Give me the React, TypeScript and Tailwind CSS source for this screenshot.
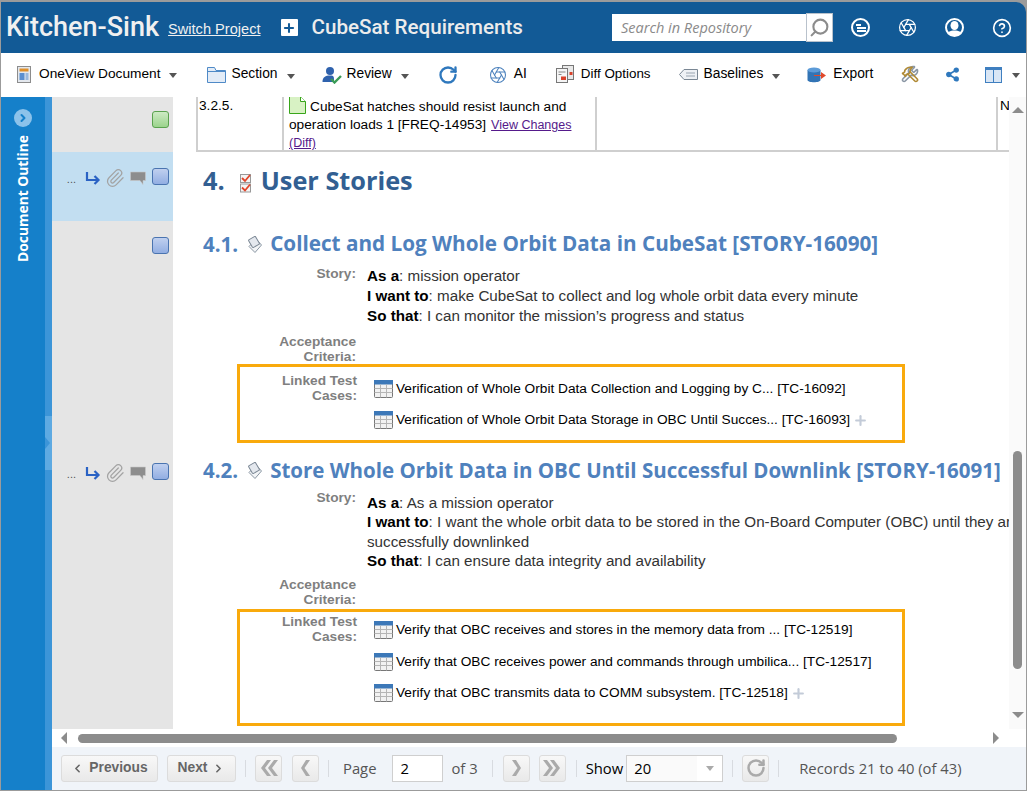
import React from 'react';
import { ChevronLeft, ChevronRight, Paperclip, Plus, Search, HelpCircle, Aperture, Share2, RotateCw, Wrench, Hammer } from 'lucide-react';

const Caret = ({ className = '' }: { className?: string }) => (
  <span className={`inline-block w-0 h-0 border-x-[4.5px] border-x-transparent border-t-[5px] border-t-[#555] ${className}`} />
);

const GridIcon = () => (
  <svg width="20" height="19" viewBox="0 0 20 19" className="shrink-0">
    <rect x="0.5" y="0.5" width="18" height="17" rx="1" fill="#f2f2f2" stroke="#777" />
    <rect x="0" y="0" width="19" height="4.5" fill="#3c78b8" />
    <path d="M0.5 8.5h18M0.5 12.5h18M6.5 4.5v13M12.5 4.5v13" stroke="#b5b5b5" fill="none" />
  </svg>
);

const ReqIcon = () => (
  <svg width="15" height="17" viewBox="0 0 15 17" className="shrink-0 ml-[9px] mr-[8px]">
    <path d="M9 3 14.5 9 8 16.5 2 10.5Z" fill="#f2f4f6" stroke="#8a96a3" />
    <rect x="3" y="1.5" width="8" height="9" rx="1" transform="rotate(-30 7 6)" fill="#e4e8ee" stroke="#7b8794" />
  </svg>
);

const Marker = ({ green }: { green?: boolean }) => (
  <span
    className={`block w-[17px] h-[17px] rounded-[3px] border bg-gradient-to-b ${
      green ? 'border-[#5aa24f] from-[#cdeac4] to-[#9bd48c]' : 'border-[#4a74b0] from-[#c0d0ef] to-[#92aee2]'
    }`}
  />
);

const RowIcons = () => (
  <div className="flex items-center mr-[6px]">
    <span className="text-[11px] leading-none text-[#555] mr-[9px] mt-[3px] font-['Liberation_Sans',sans-serif]">...</span>
    <svg width="16" height="15" viewBox="0 0 16 15">
      <path d="M2 1v8h11M9.5 5l4 4-4 4" fill="none" stroke="#2a62c4" strokeWidth="2.2" />
    </svg>
    <Paperclip size={20} strokeWidth={1.5} className="ml-[4px] text-[#a3a3a3]" />
    <svg width="16" height="15" viewBox="0 0 16 15" className="ml-[5px]">
      <path d="M0.5 1h15v8.5h-2.5v4l-3-4h-9.5Z" fill="#8d8d8d" stroke="#c8c8c8" strokeWidth="0.6" />
    </svg>
  </div>
);

const ToolItem = ({ icon, label, caret, className = '', labelClass = 'ml-[7px] text-[13.8px]' }: { icon: React.ReactNode; label?: string; caret?: boolean; className?: string; labelClass?: string }) => (
  <div className={`flex items-center ${className}`}>
    {icon}
    {label && <span className={`text-black ${labelClass}`}>{label}</span>}
    {caret && <Caret className="ml-[9px] mt-[3px]" />}
  </div>
);

const FieldLabel = ({ children, className = '' }: { children: React.ReactNode; className?: string }) => (
  <div className={`w-[183px] shrink-0 text-right text-[13.7px] leading-[15px] font-bold text-[#7f7f7f] ${className}`}>{children}</div>
);

const StoryText = ({ rows, className = '' }: { rows: [string, string][]; className?: string }) => (
  <div className={`ml-[11px] text-[15.2px] text-[#333] whitespace-nowrap ${className}`}>
    {rows.map(([k, v]) => (
      <div key={k}>
        <b className="text-black">{k}</b>: {v}
      </div>
    ))}
  </div>
);

const TestLink = ({ text, plus }: { text: string; plus?: boolean }) => (
  <div className="flex items-center h-[19px] text-[13.7px] text-black whitespace-nowrap">
    <GridIcon />
    <span className="ml-[2px]">{text}</span>
    {plus && <Plus size={15} strokeWidth={3.4} className="ml-[3px] text-[#c3cbd8]" />}
  </div>
);

const LinkedBox = ({ boxClass, labelClass, listClass, items }: { boxClass: string; labelClass: string; listClass: string; items: { text: string; plus?: boolean }[] }) => (
  <div className={`ml-[64px] w-[668px] border-[3px] border-[#f9aa0c] flex ${boxClass}`}>
    <div className={`w-[117px] shrink-0 text-right text-[13.7px] leading-[15px] font-bold text-[#7f7f7f] ${labelClass}`}>
      Linked Test
      <br />
      Cases:
    </div>
    <div className={`ml-[17px] flex flex-col ${listClass}`}>
      {items.map((it) => (
        <TestLink key={it.text} {...it} />
      ))}
    </div>
  </div>
);

const PagerBtn = ({ children, className = '' }: { children: React.ReactNode; className?: string }) => (
  <div className={`h-[27px] flex items-center justify-center rounded-[3px] border border-[#dcdcdc] bg-gradient-to-b from-[#f8f8f8] to-[#e9e9e9] ${className}`}>{children}</div>
);

const Sep = () => <span className="block w-px h-[17px] bg-[#d8dbe0] shrink-0" />;

const Chev = ({ d, width }: { d: string; width: number }) => (
  <svg width={width} height="18" viewBox={`0 0 ${width} 18`}>
    <path d={d} fill="#aaa" />
  </svg>
);

export default function App() {
  return (
    <div className="w-[1027px] h-[791px] overflow-hidden bg-[#9b9b9b] pt-[2px] pr-px pb-[1px] pl-px font-['Liberation_Sans',sans-serif] flex flex-col">
      {/* top bar */}
      <div className="h-[51px] shrink-0 bg-[#125a96] rounded-tr-[10px] flex items-center text-white">
        <span className="ml-[5px] font-['Roboto',sans-serif] font-medium text-[27px] text-[#f0f0f0]">Kitchen-Sink</span>
        <a className="ml-[9px] mt-[4px] text-[14.6px] underline text-[#f0f0f0]">Switch Project</a>
        <span className="ml-[20px] w-[17px] h-[17px] bg-white rounded-[1px] flex items-center justify-center">
          <Plus size={14} strokeWidth={3.5} className="text-[#125a96]" />
        </span>
        <span className="ml-[14px] font-['Roboto',sans-serif] font-medium text-[20.6px] text-[#ececec]">CubeSat Requirements</span>
        <div className="ml-[89px] flex items-center">
          <div className="w-[194px] h-[27px] bg-white flex items-center pl-[9px] font-['Open_Sans',sans-serif] italic text-[14.5px] text-[#8a8a8a]">Search in Repository</div>
          <div className="w-[27px] h-[29px] bg-white border border-[#b9c2cc] flex items-center justify-center">
            <Search size={21} strokeWidth={2.4} className="text-[#8c8c8c] -scale-x-100" />
          </div>
        </div>
        <div className="ml-[18px] flex items-center gap-[28px] text-white">
          <span className="w-[19px] h-[19px] rounded-full border-2 border-white flex flex-col items-start justify-center pl-[3px] gap-[1px]">
            <span className="w-[5px] h-[2px] bg-white" />
            <span className="w-[9px] h-[2px] bg-white ml-[1px]" />
            <span className="w-[9px] h-[2px] bg-white ml-[1px]" />
          </span>
          <Aperture size={19} strokeWidth={1.6} />
          <svg width="19" height="19" viewBox="0 0 19 19">
            <defs>
              <clipPath id="userRing">
                <circle cx="9.5" cy="9.5" r="8.5" />
              </clipPath>
            </defs>
            <circle cx="9.5" cy="9.5" r="8.5" fill="none" stroke="#fff" strokeWidth="2" />
            <g clipPath="url(#userRing)" fill="#fff">
              <ellipse cx="9.5" cy="7.5" rx="4" ry="4.6" />
              <path d="M1 19c0-5 4-6.5 8.5-6.5S18 14 18 19Z" />
            </g>
          </svg>
          <HelpCircle size={20} strokeWidth={2} />
        </div>
      </div>

      {/* toolbar */}
      <div className="h-[44px] shrink-0 bg-white flex items-center pl-[16px] pb-px">
        <ToolItem
          caret
          label="OneView Document"
          labelClass="ml-[8px] text-[13.7px]"
          icon={
            <svg width="14" height="17" viewBox="0 0 14 17">
              <rect x="0.5" y="0.5" width="13" height="16" fill="#e4e8ee" stroke="#8c8c8c" />
              <rect x="2.5" y="2.5" width="9" height="3" fill="#e0902b" />
              <rect x="2.5" y="7" width="5" height="7" fill="#5b8fd0" />
              <rect x="8.5" y="7" width="3" height="7" fill="#9bb9de" />
            </svg>
          }
        />
        <ToolItem
          className="ml-[29px]"
          caret
          label="Section"
          labelClass="ml-[5px] text-[13.8px]"
          icon={
            <svg width="19" height="16" viewBox="0 0 19 16" className="ml-[1px]">
              <path d="M0.5 15V0.5h7l1.5 3h9.5V15.5H0.5Z" fill="#e3ecf7" stroke="#4f8ac7" />
              <path d="M0.5 4.5h18" stroke="#4f8ac7" />
            </svg>
          }
        />
        <ToolItem
          className="ml-[27px]"
          caret
          label="Review"
          labelClass="ml-[5px] text-[13.8px]"
          icon={
            <svg width="20" height="18" viewBox="0 0 20 18">
              <circle cx="8" cy="5" r="4" fill="#2f62ad" />
              <path d="M0.5 16c0-5 3-6.5 7.5-6.5S12 11 12 16Z" fill="#2f62ad" />
              <path d="M9 13l3.5 3.5L19 10" fill="none" stroke="#3a9b56" strokeWidth="2.4" />
            </svg>
          }
        />
        <RotateCw size={20} strokeWidth={2.8} className="ml-[29px] text-[#2f78bd]" />
        <ToolItem className="ml-[31px]" label="AI" icon={<Aperture size={18} strokeWidth={1.4} className="text-[#4d82bd]" />} />
        <ToolItem
          className="ml-[29px]"
          label="Diff Options"
          labelClass="ml-[7px] text-[13.4px]"
          icon={
            <svg width="18" height="18" viewBox="0 0 18 18">
              <rect x="6.5" y="0.5" width="11" height="14" fill="#e9e9e9" stroke="#777" />
              <rect x="0.5" y="3.5" width="11" height="14" fill="#f5f5f5" stroke="#777" />
              <path d="M2.5 7h7M2.5 9.5h3" stroke="#888" />
              <rect x="5" y="11.5" width="5" height="3.5" fill="#d9422b" />
              <rect x="13.5" y="7" width="3" height="3" fill="#d9422b" />
            </svg>
          }
        />
        <ToolItem
          className="ml-[28px]"
          caret
          label="Baselines"
          labelClass="ml-[6px] text-[13.8px]"
          icon={
            <svg width="19" height="13" viewBox="0 0 19 13">
              <path d="M5 1.5h13.5v10H5L0.5 6.5Z" fill="#eef1f5" stroke="#7a8794" />
              <path d="M7 5h9M7 8h9" stroke="#9aa5b1" />
            </svg>
          }
        />
        <ToolItem
          className="ml-[27px]"
          label="Export"
          icon={
            <svg width="19" height="16" viewBox="0 0 19 16">
              <path d="M0.5 3v10c0 3 13 3 13 0V3Z" fill="#3274b5" />
              <ellipse cx="7" cy="3" rx="6.5" ry="2.5" fill="#5c9bd8" />
              <path d="M7 8h7V5l5 3.5-5 3.5V9H7Z" fill="#e1492b" />
            </svg>
          }
        />
        <div className="ml-[28px] relative w-[19px] h-[19px]">
          <Wrench size={18} strokeWidth={2.2} className="absolute inset-0 text-[#8b97a5]" />
          <Hammer size={18} strokeWidth={2.2} className="absolute inset-0 -scale-x-100 text-[#b08a35]" />
        </div>
        <Share2 size={15} strokeWidth={2.6} fill="#2f78bd" className="ml-[25px] text-[#2f78bd]" />
        <svg width="17" height="16" viewBox="0 0 17 16" className="ml-[25px]">
          <rect x="0.5" y="0.5" width="16" height="15" fill="#d9e6f5" stroke="#3f7fc0" />
          <rect x="0" y="0" width="17" height="3" fill="#3f7fc0" />
          <path d="M8.5 0v16" stroke="#3f7fc0" />
        </svg>
        <Caret className="ml-[10px] mt-[1px] border-x-[3.5px] border-t-[4px]" />
      </div>

      {/* main */}
      <div className="flex-1 min-h-0 flex">
        {/* outline rail */}
        <div className="w-[44px] shrink-0 bg-[#1580ca] flex flex-col items-center pt-[12px]">
          <span className="w-[18px] h-[18px] rounded-full bg-[#8cc2ea] flex items-center justify-center">
            <ChevronRight size={12} strokeWidth={4} className="text-[#1580ca]" />
          </span>
          <span className="mt-[8px] [writing-mode:vertical-rl] rotate-180 font-['Open_Sans',sans-serif] font-bold text-[13.8px] text-white whitespace-nowrap">Document Outline</span>
        </div>
        <div className="w-[7px] shrink-0 bg-[#3c95d8] flex flex-col pt-[319px]">
          <span className="w-[7px] h-[54px] bg-[#5eaae2] flex items-center">
            <span className="w-0 h-0 border-y-[6px] border-y-transparent border-l-[5px] border-l-[#3c95d8]" />
          </span>
        </div>

        <div className="flex-1 min-w-0 flex flex-col bg-white">
          <div className="flex-1 min-h-0 flex">
            {/* gutter */}
            <div className="w-[121px] shrink-0 bg-[#e5e5e5] flex flex-col">
              <div className="h-[55px] flex justify-end items-start pt-[14px] pr-[4px]">
                <Marker green />
              </div>
              <div className="h-[69px] bg-[#c2def1] flex justify-end items-start pt-[16px] pr-[4px]">
                <RowIcons />
                <Marker />
              </div>
              <div className="h-[226px] flex justify-end items-start pt-[16px] pr-[4px]">
                <Marker />
              </div>
              <div className="flex justify-end items-start pt-[16px] pr-[4px]">
                <RowIcons />
                <Marker />
              </div>
            </div>

            {/* document */}
            <div className="flex-1 min-w-0 bg-white overflow-hidden">
              <div className="ml-[23px] h-[55px] flex border-b-2 border-[#cfcfcf] w-[817px] text-[13.7px] text-black">
                <div className="w-[88px] shrink-0 border-x-2 border-[#cfcfcf] px-[1px] -mt-[1px]">3.2.5.</div>
                <div className="w-[311px] shrink-0 leading-[17.5px] pl-[5px] -mt-[1px]">
                  <svg width="17" height="18" viewBox="0 0 17 18" className="inline-block mr-[4px] align-[-3px]">
                    <path d="M0.5 0.5h11l5 5v12h-16Z" fill="#d8f2c4" stroke="#38a51a" />
                    <path d="M11.5 0.5v5h5" fill="#fff" stroke="#38a51a" />
                  </svg>
                  <span>CubeSat hatches should resist launch and</span>
                  <br />
                  <span>operation loads 1 [FREQ-14953]</span>
                  <a className="ml-[5px] text-[12.5px] underline text-[#551a8b]">View Changes</a>
                  <br />
                  <a className="text-[12.5px] underline text-[#551a8b]">(Diff)</a>
                </div>
                <div className="w-[403px] shrink-0 border-x-2 border-[#cfcfcf]" />
                <div className="pl-[2px] -mt-[1px]">N</div>
              </div>

              <div className="ml-[30px] mt-[11px] h-[36px] flex items-center font-['Open_Sans',sans-serif] font-bold text-[25.3px] text-[#325f92]">
                <span>4.</span>
                <svg width="11" height="19" viewBox="0 0 11 19" className="ml-[15px] mr-[10px] mt-[4px]">
                  <rect x="0.5" y="0.5" width="10" height="8" fill="#f4f4f4" stroke="#999" />
                  <rect x="0.5" y="10" width="10" height="8" fill="#f4f4f4" stroke="#999" />
                  <path d="M2 4l3 3 5-6M2 13.5l3 3 5-6" fill="none" stroke="#e2452a" strokeWidth="1.8" />
                </svg>
                <span>User Stories</span>
              </div>

              <div className="ml-[30px] mt-[31px] h-[28px] flex items-center font-['Open_Sans',sans-serif] font-bold text-[20.5px] text-[#4f81bd] whitespace-nowrap">
                <span>4.1.</span>
                <ReqIcon />
                <span className="text-[20.7px]">Collect and Log Whole Orbit Data in CubeSat [STORY-16090]</span>
              </div>
              <div className="mt-[7px] flex">
                <FieldLabel className="pt-px">Story:</FieldLabel>
                <StoryText
                  className="mt-[1px] leading-[20px]"
                  rows={[
                    ['As a', 'mission operator'],
                    ['I want to', 'make CubeSat to collect and log whole orbit data every minute'],
                    ['So that', 'I can monitor the mission’s progress and status'],
                  ]}
                />
              </div>
              <FieldLabel className="mt-[8px]">
                Acceptance
                <br />
                Criteria:
              </FieldLabel>
              <LinkedBox
                boxClass="h-[79px]"
                labelClass="pt-[6px]"
                listClass="pt-[13px] gap-[12px]"
                items={[
                  { text: 'Verification of Whole Orbit Data Collection and Logging by C... [TC-16092]' },
                  { text: 'Verification of Whole Orbit Data Storage in OBC Until Succes... [TC-16093]', plus: true },
                ]}
              />

              <div className="ml-[30px] mt-[13px] h-[28px] flex items-center font-['Open_Sans',sans-serif] font-bold text-[20.5px] text-[#4f81bd] whitespace-nowrap">
                <span>4.2.</span>
                <ReqIcon />
                <span>Store Whole Orbit Data in OBC Until Successful Downlink [STORY-16091]</span>
              </div>
              <div className="mt-[5px] flex">
                <FieldLabel className="pt-px">Story:</FieldLabel>
                <div className="mt-[4px] leading-[19.3px]">
                  <StoryText
                    rows={[
                      ['As a', 'As a mission operator'],
                      ['I want to', 'I want the whole orbit data to be stored in the On-Board Computer (OBC) until they are'],
                    ]}
                  />
                  <div className="ml-[11px] text-[15.2px] text-[#333]">successfully downlinked</div>
                  <StoryText rows={[['So that', 'I can ensure data integrity and availability']]} />
                </div>
              </div>
              <FieldLabel className="mt-[7px]">
                Acceptance
                <br />
                Criteria:
              </FieldLabel>
              <div className="mt-[2px]">
                <LinkedBox
                  boxClass="h-[117px]"
                  labelClass="pt-[2px]"
                  listClass="pt-[9px] gap-[12.5px]"
                  items={[
                    { text: 'Verify that OBC receives and stores in the memory data from ... [TC-12519]' },
                    { text: 'Verify that OBC receives power and commands through umbilica... [TC-12517]' },
                    { text: 'Verify that OBC transmits data to COMM subsystem. [TC-12518]', plus: true },
                  ]}
                />
              </div>
            </div>

            {/* vertical scrollbar */}
            <div className="w-[17px] shrink-0 bg-[#fafafa] flex flex-col items-center pt-[10px] pb-[11px]">
              <span className="w-0 h-0 border-x-[6px] border-x-transparent border-b-[6px] border-b-[#8c8c8c]" />
              <div className="flex-1 flex flex-col justify-end pb-[43px]">
                <span className="block w-[9px] h-[218px] rounded-[5px] bg-[#8c8c8c]" />
              </div>
              <span className="w-0 h-0 border-x-[6px] border-x-transparent border-t-[6px] border-t-[#8c8c8c]" />
            </div>
          </div>

          {/* horizontal scrollbar */}
          <div className="h-[18px] shrink-0 bg-white flex items-center pl-[9px] pr-[27px]">
            <span className="w-0 h-0 border-y-[6px] border-y-transparent border-r-[6px] border-r-[#8c8c8c]" />
            <div className="flex-1 pl-[11px]">
              <span className="block w-[819px] h-[9px] rounded-[5px] bg-[#8c8c8c]" />
            </div>
            <span className="w-0 h-0 border-y-[6px] border-y-transparent border-l-[6px] border-l-[#8c8c8c]" />
          </div>

          {/* pager */}
          <div className="h-[43px] shrink-0 bg-[#f0f4f9] flex items-center pl-[9px] pb-[1px] font-['Open_Sans',sans-serif] text-[14.8px]">
            <PagerBtn className="w-[97px] font-['Liberation_Sans',sans-serif] font-bold text-[#666] text-[13.8px] gap-[5px]">
              <ChevronLeft size={13} strokeWidth={3} />
              Previous
            </PagerBtn>
            <PagerBtn className="ml-[9px] w-[69px] font-['Liberation_Sans',sans-serif] font-bold text-[#666] text-[13.8px] gap-[5px]">
              Next
              <ChevronRight size={13} strokeWidth={3} />
            </PagerBtn>
            <span className="ml-[9px]"><Sep /></span>
            <PagerBtn className="ml-[9px] w-[27px]"><Chev width={20} d="M8 1h4L6 9l6 8H8L2 9ZM15 1h4l-6 8 6 8h-4L9 9Z" /></PagerBtn>
            <PagerBtn className="ml-[10px] w-[27px]"><Chev width={12} d="M6 1h4L4.5 9l5.5 8H6L1 9Z" /></PagerBtn>
            <span className="ml-[9px]"><Sep /></span>
            <span className="ml-[14px] text-[#555]">Page</span>
            <div className="ml-[16px] w-[51px] h-[27px] bg-white border border-[#cfcfcf] flex items-center pl-[7px] text-black">2</div>
            <span className="ml-[8px] text-[#555]">of 3</span>
            <span className="ml-[14px]"><Sep /></span>
            <PagerBtn className="ml-[10px] w-[27px]"><Chev width={12} d="M6 1H2l5.5 8L2 17h4l5-8Z" /></PagerBtn>
            <PagerBtn className="ml-[9px] w-[27px]"><Chev width={20} d="M5 1H1l6 8-6 8h4l6-8ZM12 1H8l6 8-6 8h4l6-8Z" /></PagerBtn>
            <span className="ml-[10px]"><Sep /></span>
            <span className="ml-[9px] text-black">Show</span>
            <div className="ml-[3px] w-[97px] h-[27px] bg-[#fafafa] border border-[#cfcfcf] flex items-center pl-[7px] text-black shrink-0">
              <span className="flex-1">20</span>
              <span className="w-[25px] h-full bg-white flex items-center justify-center">
                <Caret className="border-t-[#aaa]" />
              </span>
            </div>
            <span className="ml-[9px]"><Sep /></span>
            <PagerBtn className="ml-[9px] w-[27px] text-[#aaa]"><RotateCw size={20} strokeWidth={3} /></PagerBtn>
            <span className="ml-[9px]"><Sep /></span>
            <span className="ml-[20px] text-[#555]">Records 21 to 40 (of 43)</span>
          </div>
        </div>
      </div>
    </div>
  );
}
